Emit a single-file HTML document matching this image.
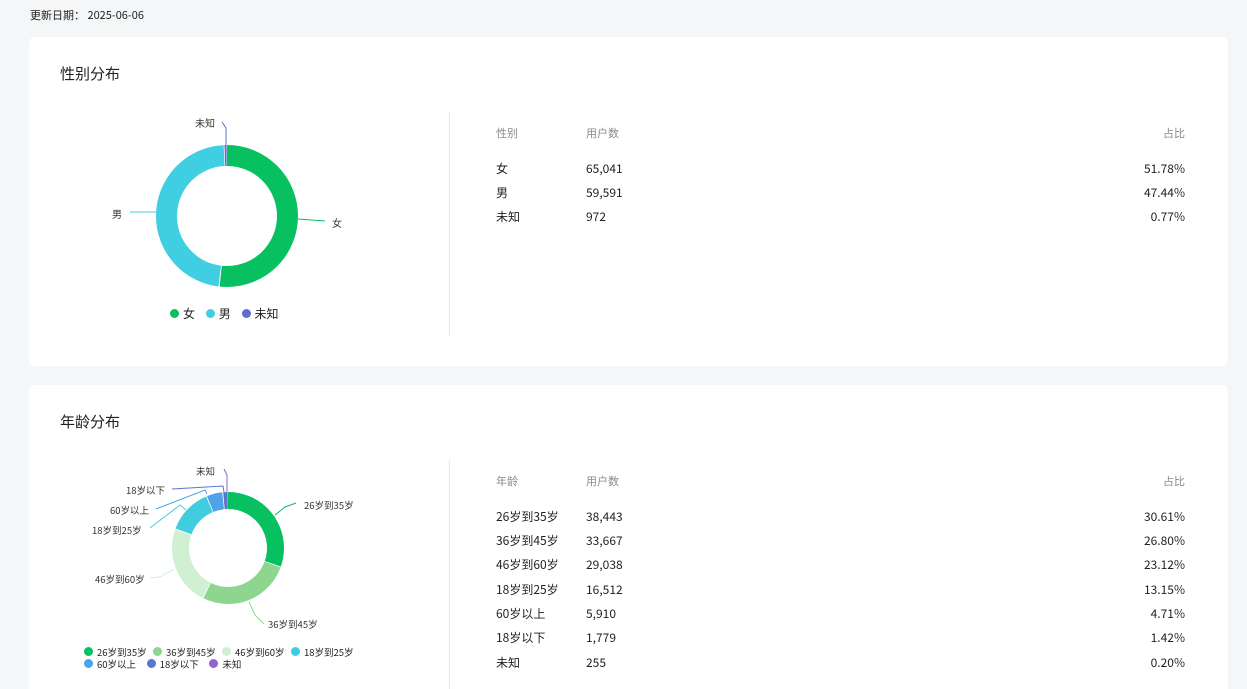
<!DOCTYPE html>
<html><head><meta charset="utf-8"><style>
html,body{margin:0;width:1247px;height:689px;overflow:hidden}
body{background:#f5f6f7;font-family:"Noto Sans CJK SC","Liberation Sans",sans-serif;color:#1f1f1f;position:relative}
.a{position:absolute;white-space:nowrap;line-height:1}
.card{position:absolute;left:29px;width:1199px;background:#fff;border-radius:6px}
.t{font-size:15px;color:#1f1f1f}
.s{font-size:12px}
.h{font-size:11px;color:#8a8a8a}
.r{text-align:right;width:100px}
.vl{position:absolute;left:449px;width:1px;background:#e8e8e8}
.dot{display:inline-block;width:9px;height:9px;border-radius:50%;vertical-align:0px;margin-right:4px}
</style></head><body>
<div class="a s" style="left:30px;top:10px;font-size:11px">更新日期：&nbsp;2025-06-06</div>

<div class="card" style="top:37px;height:329px"></div>
<div class="a t" style="left:60px;top:66px">性别分布</div>
<div class="vl" style="top:112px;height:224px"></div>
<svg class="a" style="left:0;top:0" width="449" height="366" font-family="Noto Sans CJK SC">
<g transform="rotate(-90 227 216)" fill="none" stroke-width="21">
<circle cx="227" cy="216" r="60.5" stroke="#07c160" stroke-dasharray="196.3 400" stroke-dashoffset="0"/>
<circle cx="227" cy="216" r="60.5" stroke="#40cfe2" stroke-dasharray="179.8 400" stroke-dashoffset="-197.3"/>
<circle cx="227" cy="216" r="60.5" stroke="#5b6fd1" stroke-dasharray="1.8 400" stroke-dashoffset="-377.8"/>
</g>
<polyline points="298,219 325,221" fill="none" stroke="#07c160" stroke-width="1"/>
<polyline points="157,212 130,212" fill="none" stroke="#40cfe2" stroke-width="1"/>
<polyline points="226,145 226,128 222,122" fill="none" stroke="#5b6fd1" stroke-width="1"/>
<text x="332" y="227" font-size="10" fill="#333">女</text>
<text x="112" y="218" font-size="10" fill="#333">男</text>
<text x="195" y="127" font-size="10" fill="#333">未知</text>
</svg>
<div class="a s" style="left:170px;top:308px"><span class="dot" style="background:#07c160"></span>女&nbsp;&nbsp;&nbsp;&nbsp;<span class="dot" style="background:#40cfe2"></span>男&nbsp;&nbsp;&nbsp;&nbsp;<span class="dot" style="background:#5b6fd1"></span>未知</div>

<div class="a h" style="left:496px;top:128px">性别</div><div class="a h" style="left:586px;top:128px">用户数</div><div class="a h r" style="left:1085px;top:128px">占比</div>
<div class="a s" style="left:496px;top:163px">女</div><div class="a s" style="left:586px;top:163px">65,041</div><div class="a s r" style="left:1085px;top:163px">51.78%</div>
<div class="a s" style="left:496px;top:187px">男</div><div class="a s" style="left:586px;top:187px">59,591</div><div class="a s r" style="left:1085px;top:187px">47.44%</div>
<div class="a s" style="left:496px;top:211px">未知</div><div class="a s" style="left:586px;top:211px">972</div><div class="a s r" style="left:1085px;top:211px">0.77%</div>

<div class="card" style="top:385px;height:320px"></div>
<div class="a t" style="left:60px;top:414px">年龄分布</div>
<div class="vl" style="top:460px;height:229px"></div>
<svg class="a" style="left:0;top:385px" width="449" height="304" font-family="Noto Sans CJK SC">
<g transform="translate(0,-385)">
<g transform="rotate(-90 228 548)" fill="none" stroke-width="17">
<circle cx="228" cy="548" r="47.5" stroke="#07c160" stroke-dasharray="90.6 400" stroke-dashoffset="0"/>
<circle cx="228" cy="548" r="47.5" stroke="#8ed68f" stroke-dasharray="79.2 400" stroke-dashoffset="-91.4"/>
<circle cx="228" cy="548" r="47.5" stroke="#d0efd3" stroke-dasharray="68.2 400" stroke-dashoffset="-171.4"/>
<circle cx="228" cy="548" r="47.5" stroke="#40cde0" stroke-dasharray="38.5 400" stroke-dashoffset="-240.4"/>
<circle cx="228" cy="548" r="47.5" stroke="#4fa3e8" stroke-dasharray="13.3 400" stroke-dashoffset="-279.7"/>
<circle cx="228" cy="548" r="47.5" stroke="#5c73d0" stroke-dasharray="3.6 400" stroke-dashoffset="-293.8"/>
<circle cx="228" cy="548" r="47.5" stroke="#9065d0" stroke-dasharray="0.6 400" stroke-dashoffset="-297.7"/>
</g>
<polyline points="275,515 285,507 296,503" fill="none" stroke="#07c160"/>
<polyline points="249,602 255,615 264,624" fill="none" stroke="#8ed68f"/>
<polyline points="174,569 160,577 150,578" fill="none" stroke="#d0efd3"/>
<polyline points="186,510 180,505 150,528" fill="none" stroke="#40cde0"/>
<polyline points="207,494 205,490 156,509" fill="none" stroke="#4fa3e8"/>
<polyline points="224,492 223,486 172,489" fill="none" stroke="#5c73d0"/>
<polyline points="227,492 227,475 224,469" fill="none" stroke="#9065d0"/>
<g font-size="9.5" fill="#333">
<text x="304" y="509">26岁到35岁</text>
<text x="268" y="628">36岁到45岁</text>
<text x="95" y="583">46岁到60岁</text>
<text x="92" y="534">18岁到25岁</text>
<text x="110" y="514">60岁以上</text>
<text x="126" y="494">18岁以下</text>
<text x="196" y="475">未知</text>
</g></g></svg>
<div class="a" style="left:84px;top:646px;font-size:9.5px;line-height:12px">
<span class="dot" style="background:#07c160"></span>26岁到35岁&nbsp;&nbsp;&nbsp;<span class="dot" style="background:#8ed68f"></span>36岁到45岁&nbsp;&nbsp;&nbsp;<span class="dot" style="background:#d0efd3"></span>46岁到60岁&nbsp;&nbsp;&nbsp;<span class="dot" style="background:#40cde0"></span>18岁到25岁<br>
<span class="dot" style="background:#4fa3e8"></span>60岁以上&nbsp;&nbsp;&nbsp;&nbsp;&nbsp;<span class="dot" style="background:#5c73d0"></span>18岁以下&nbsp;&nbsp;&nbsp;&nbsp;&nbsp;<span class="dot" style="background:#9065d0"></span>未知</div>

<div class="a h" style="left:496px;top:476px">年龄</div><div class="a h" style="left:586px;top:476px">用户数</div><div class="a h r" style="left:1085px;top:476px">占比</div>
<div class="a s" style="left:496px;top:511px">26岁到35岁</div><div class="a s" style="left:586px;top:511px">38,443</div><div class="a s r" style="left:1085px;top:511px">30.61%</div>
<div class="a s" style="left:496px;top:535px">36岁到45岁</div><div class="a s" style="left:586px;top:535px">33,667</div><div class="a s r" style="left:1085px;top:535px">26.80%</div>
<div class="a s" style="left:496px;top:559px">46岁到60岁</div><div class="a s" style="left:586px;top:559px">29,038</div><div class="a s r" style="left:1085px;top:559px">23.12%</div>
<div class="a s" style="left:496px;top:584px">18岁到25岁</div><div class="a s" style="left:586px;top:584px">16,512</div><div class="a s r" style="left:1085px;top:584px">13.15%</div>
<div class="a s" style="left:496px;top:608px">60岁以上</div><div class="a s" style="left:586px;top:608px">5,910</div><div class="a s r" style="left:1085px;top:608px">4.71%</div>
<div class="a s" style="left:496px;top:632px">18岁以下</div><div class="a s" style="left:586px;top:632px">1,779</div><div class="a s r" style="left:1085px;top:632px">1.42%</div>
<div class="a s" style="left:496px;top:657px">未知</div><div class="a s" style="left:586px;top:657px">255</div><div class="a s r" style="left:1085px;top:657px">0.20%</div>
</body></html>
